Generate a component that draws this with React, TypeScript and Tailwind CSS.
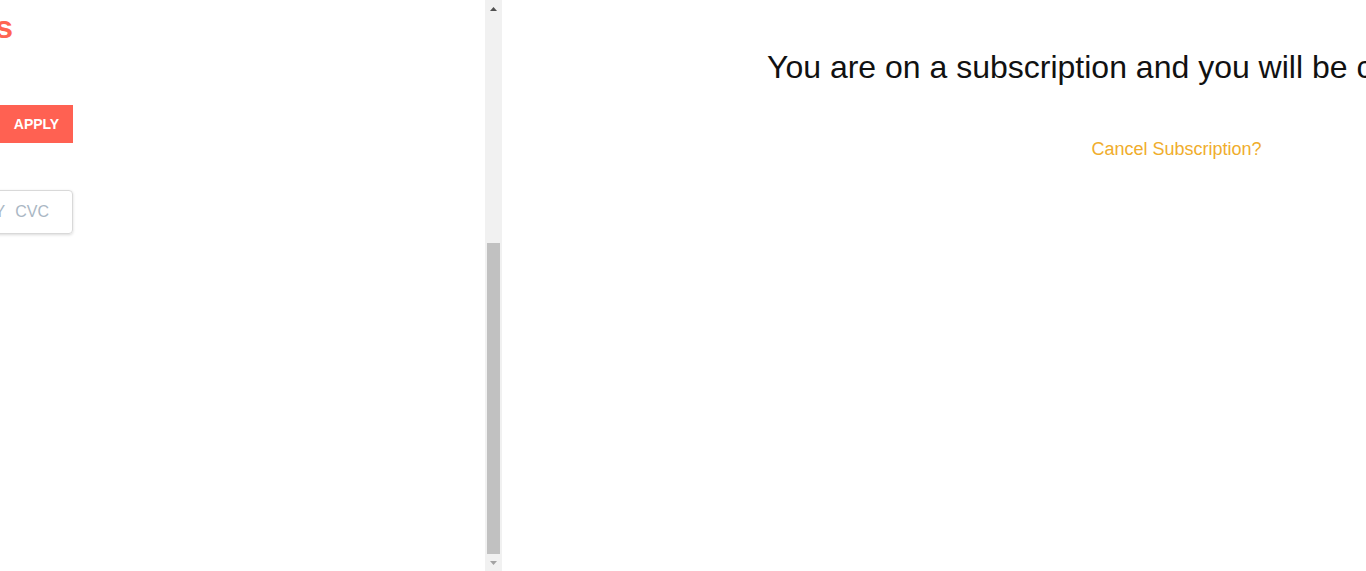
import React from 'react';

const font = { fontFamily: '"Liberation Sans", Arial, sans-serif' };

const FakeScrollbar = () => (
  <div className="flex h-full w-[17px] shrink-0 flex-col bg-[#f1f1f1]">
    <div className="flex h-[17px] items-center justify-center">
      <svg width="7" height="4" viewBox="0 0 7 4">
        <path d="M0 4 L3.5 0 L7 4 Z" fill="#505050" />
      </svg>
    </div>
    <div className="flex flex-1 flex-col px-[2px]">
      <div className="h-[226px]" />
      <div className="flex-1 bg-[#c1c1c1]" />
    </div>
    <div className="flex h-[17px] items-center justify-center">
      <svg width="7" height="4" viewBox="0 0 7 4">
        <path d="M0 0 L7 0 L3.5 4 Z" fill="#a3a3a3" />
      </svg>
    </div>
  </div>
);

export default function App() {
  return (
    <div className="flex h-[571px] w-[1366px] overflow-hidden bg-white" style={font}>
      {/* left pane, scrolled */}
      <div className="flex h-full w-[502px] shrink-0">
        <div className="h-full w-[485px] overflow-hidden">
          <div className="flex w-[73px] flex-col items-end">
            <h2 className="mr-[60px] mt-[13px] whitespace-nowrap text-[32px] font-bold leading-[28px] text-[#ff6452]">
              Payment Details
            </h2>
            <div className="mt-[64px] flex h-[38px] items-stretch">
              <input
                className="w-[280px] border border-[#80bdff] px-3 text-[15px] outline-none"
                placeholder="Coupon code"
              />
              <button className="w-[73px] shrink-0 bg-[#ff6152] text-[14px] font-bold text-white">
                APPLY
              </button>
            </div>
            <div className="mt-[47px] flex h-[44px] w-[420px] items-center justify-between rounded border border-[#d9d9d9] pl-3 pr-[23px] text-[16px] text-[#aab7c4] shadow-[0_1px_3px_rgba(0,0,0,0.15)]">
              <span>Card number</span>
              <span className="flex gap-[10px]">
                <span>MM / YY</span>
                <span>CVC</span>
              </span>
            </div>
          </div>
        </div>
        <FakeScrollbar />
      </div>

      {/* right pane */}
      <div className="h-full flex-1 overflow-hidden">
        <div className="w-[1349px]">
          <h1 className="mt-[49px] whitespace-nowrap pl-[265px] text-[32px] font-normal leading-[36px] text-[#111]">
            You are on a subscription and you will be charged automatically every month.
          </h1>
          <div className="mt-[53px] text-center">
            <a href="#" className="text-[18px] leading-[20px] text-[#f0ad2c]">
              Cancel Subscription?
            </a>
          </div>
        </div>
      </div>
    </div>
  );
}
